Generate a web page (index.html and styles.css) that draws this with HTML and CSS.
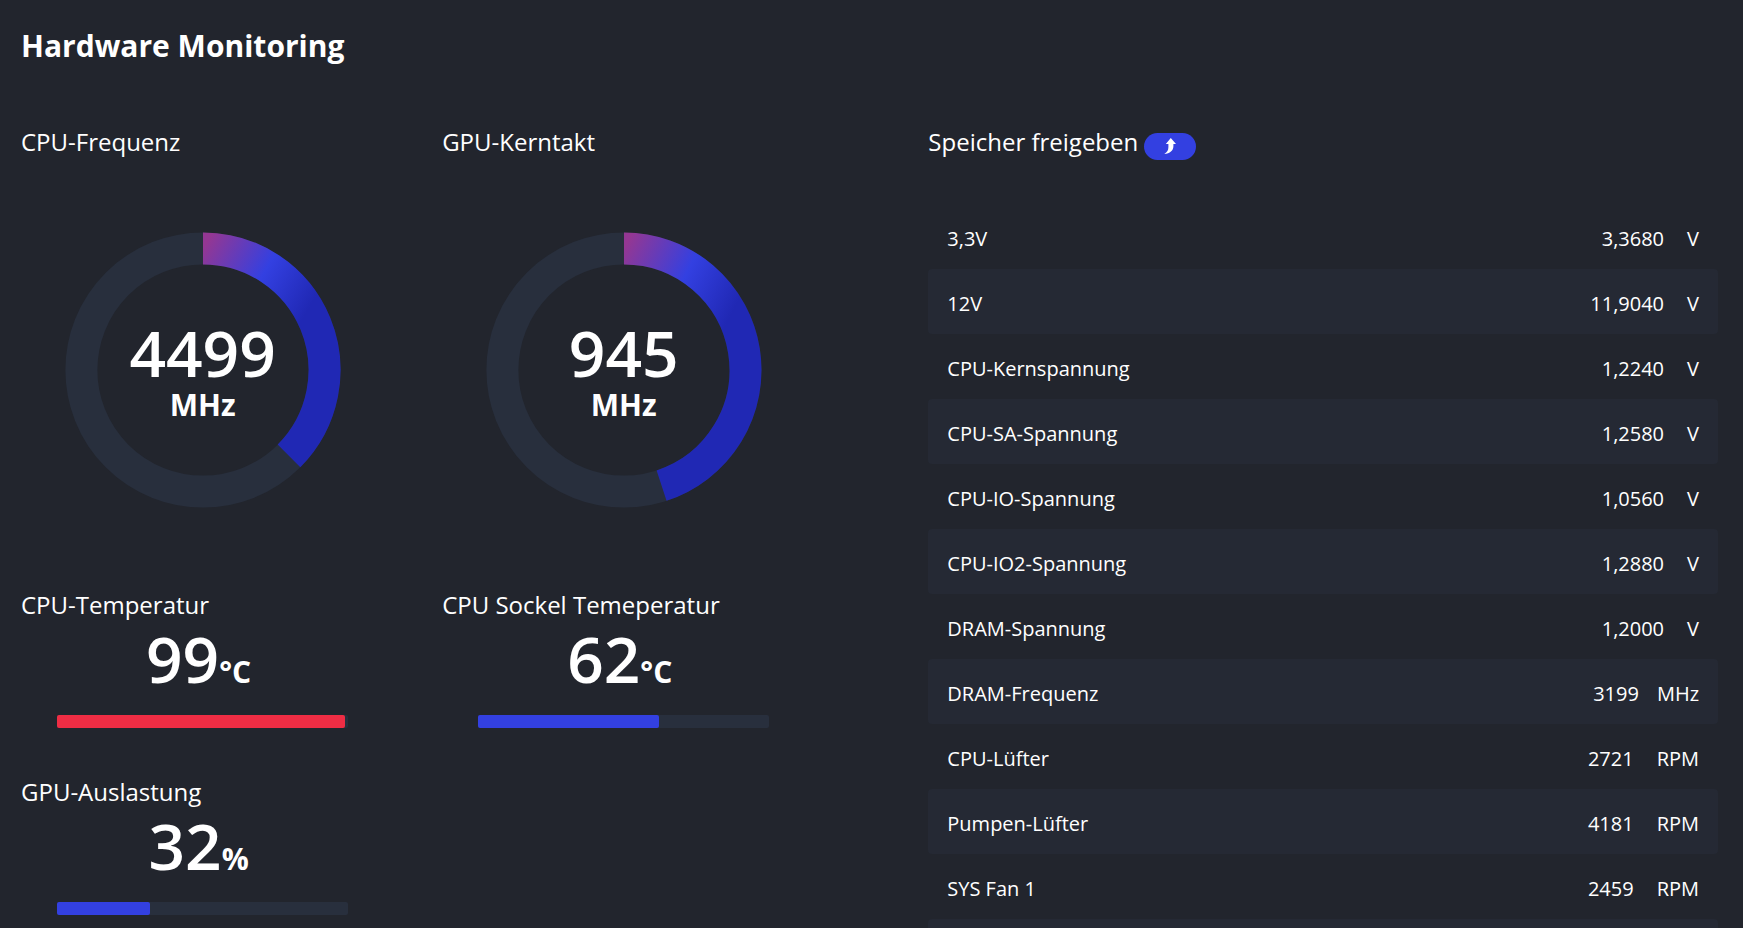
FILE: index.html
```html
<!DOCTYPE html>
<html lang="de">
<head>
    <meta charset="utf-8">
    <title>Hardware Monitoring</title>
    <link rel="stylesheet" href="styles.css">
</head>
<body>
<div class="page">
    <h1 class="main_title">Hardware Monitoring</h1>
    <div class="columns">
        <div class="gauges">
            <div class="card clock">
                <h2 class="section">CPU-Frequenz</h2>
                <div class="ring">
                    <svg viewBox="-138 -138 276 276" aria-hidden="true">
                        <defs>
                            <linearGradient id="ring_fill" x1="0" y1="0" x2="1" y2="1">
                                <stop offset="0" stop-color="#943793"/>
                                <stop offset="0.31" stop-color="#3340e1"/>
                                <stop offset="0.58" stop-color="#2028b4"/>
                            </linearGradient>
                        </defs>
                        <circle class="ring_track" r="121.6"/>
                        <path class="ring_bar" d="M0 -121.6A121.6 121.6 0 0 1 86 85.9"/>
                    </svg>
                    <div class="ring_text">
                        <span class="number">4499</span>
                        <span class="unit">MHz</span>
                    </div>
                </div>
            </div>
            <div class="card clock">
                <h2 class="section">GPU-Kerntakt</h2>
                <div class="ring">
                    <svg viewBox="-138 -138 276 276" aria-hidden="true">
                        <circle class="ring_track" r="121.6"/>
                        <path class="ring_bar" d="M0 -121.6A121.6 121.6 0 0 1 37.6 115.6"/>
                    </svg>
                    <div class="ring_text">
                        <span class="number">945</span>
                        <span class="unit">MHz</span>
                    </div>
                </div>
            </div>
            <div class="card">
                <h2 class="section">CPU-Temperatur</h2>
                <div class="value"><span class="number">99</span><span class="unit">°C</span></div>
                <div class="bar"><div class="bar_fill critical" style="width: 99%"></div></div>
            </div>
            <div class="card">
                <h2 class="section">CPU Sockel Temeperatur</h2>
                <div class="value"><span class="number">62</span><span class="unit">°C</span></div>
                <div class="bar"><div class="bar_fill" style="width: 62%"></div></div>
            </div>
            <div class="card">
                <h2 class="section">GPU-Auslastung</h2>
                <div class="value"><span class="number">32</span><span class="unit">%</span></div>
                <div class="bar"><div class="bar_fill" style="width: 32%"></div></div>
            </div>
        </div>

        <div class="sensors">
            <div class="sensors_head">
                <h2 class="section" id="free_memory">Speicher freigeben</h2>
                <button type="button" class="free_button" aria-labelledby="free_memory">
                    <svg viewBox="0 0 12 16" width="12" height="16" aria-hidden="true">
                        <path d="M6.8 0L12 6H9.4V8.2C9.4 12.5 6 15.6 0.3 16C3.2 14.2 4.4 12.2 4.4 9V6H1.8Z"/>
                    </svg>
                </button>
            </div>
            <table class="main_table">
                <tr><td>3,3V</td><td class="reading">3,3680<span class="reading_unit">V</span></td></tr>
                <tr><td>12V</td><td class="reading">11,9040<span class="reading_unit">V</span></td></tr>
                <tr><td>CPU-Kernspannung</td><td class="reading">1,2240<span class="reading_unit">V</span></td></tr>
                <tr><td>CPU-SA-Spannung</td><td class="reading">1,2580<span class="reading_unit">V</span></td></tr>
                <tr><td>CPU-IO-Spannung</td><td class="reading">1,0560<span class="reading_unit">V</span></td></tr>
                <tr><td>CPU-IO2-Spannung</td><td class="reading">1,2880<span class="reading_unit">V</span></td></tr>
                <tr><td>DRAM-Spannung</td><td class="reading">1,2000<span class="reading_unit">V</span></td></tr>
                <tr><td>DRAM-Frequenz</td><td class="reading">3199<span class="reading_unit mhz">MHz</span></td></tr>
                <tr><td>CPU-Lüfter</td><td class="reading">2721<span class="reading_unit">RPM</span></td></tr>
                <tr><td>Pumpen-Lüfter</td><td class="reading">4181<span class="reading_unit">RPM</span></td></tr>
                <tr><td>SYS Fan 1</td><td class="reading">2459<span class="reading_unit">RPM</span></td></tr>
                <tr><td></td><td></td></tr>
            </table>
        </div>
    </div>
</div>
</body>
</html>
```
FILE: styles.css
```css
* {
    box-sizing: border-box;
}

body {
    margin: 0;
    font-family: "Segoe UI", "Open Sans", "Noto Sans", sans-serif;
    color: #fff;
    background-color: #22252d;
}

.page {
    height: 100vh;
    overflow: hidden;
    padding: 24px 25px 0 21px;
}

.main_title {
    margin: 0 0 56px;
    font-size: 30px;
    font-weight: bold;
    line-height: 44px;
}

.columns {
    display: grid;
    grid-template-columns: 16fr 15fr;
    column-gap: 65px;
}

.section {
    margin: 0;
    font-size: 24px;
    font-weight: normal;
    line-height: 36px;
    white-space: nowrap;
}

/* left side */
.gauges {
    display: grid;
    grid-template-columns: 1fr 1fr;
    align-content: start;
}

.card {
    padding-right: 58px;
    padding-bottom: 46px;
}

.clock {
    padding-bottom: 79px;
}

.ring {
    display: grid;
    justify-content: center;
    margin-top: 72px;
}

.ring svg,
.ring_text {
    grid-area: 1 / 1;
}

.ring svg {
    display: block;
    width: 276px;
    height: 276px;
}

.ring_track,
.ring_bar {
    fill: none;
    stroke-width: 32;
}

.ring_track {
    stroke: #282f3d;
}

.ring_bar {
    stroke: url(#ring_fill);
}

.ring_text {
    display: flex;
    flex-direction: column;
    align-items: center;
    justify-content: center;
    padding-top: 6px;
}

.number {
    font-size: 64px;
    font-weight: 600;
    line-height: 64px;
}

.unit {
    font-size: 30px;
    font-weight: bold;
    line-height: 40px;
}

.value {
    display: flex;
    align-items: baseline;
    justify-content: center;
    height: 76px;
    padding: 4px 8px 0 0;
}

.bar {
    height: 13px;
    margin: 16px 36px 0;
    border-radius: 2px;
    background-color: #282f3d;
}

.bar_fill {
    height: 13px;
    border-radius: 2px;
    background-color: #3340e1;
}

.critical {
    background-color: #ef2d44;
}

/* right side */
.sensors_head {
    display: flex;
    align-items: center;
    gap: 6px;
    margin-bottom: 44px;
}

.free_button {
    display: flex;
    align-items: center;
    justify-content: center;
    width: 52px;
    height: 27px;
    margin-top: 8px;
    padding: 0;
    border: 0;
    border-radius: 14px;
    background-color: #3340e1;
    cursor: pointer;
}

.free_button path {
    fill: #fff;
}

.main_table {
    width: 100%;
    border-collapse: separate;
    border-spacing: 0;
    font-size: 20px;
}

.main_table td {
    height: 65px;
    padding: 4px 19px 0;
    line-height: 28px;
}

.main_table tr:nth-child(even) td {
    background-color: #252934;
}

.main_table td:first-child {
    border-radius: 4px 0 0 4px;
}

.main_table td:last-child {
    border-radius: 0 4px 4px 0;
}

.reading {
    text-align: right;
}

.reading_unit {
    margin-left: 23px;
}

.mhz {
    margin-left: 18px;
}
```
